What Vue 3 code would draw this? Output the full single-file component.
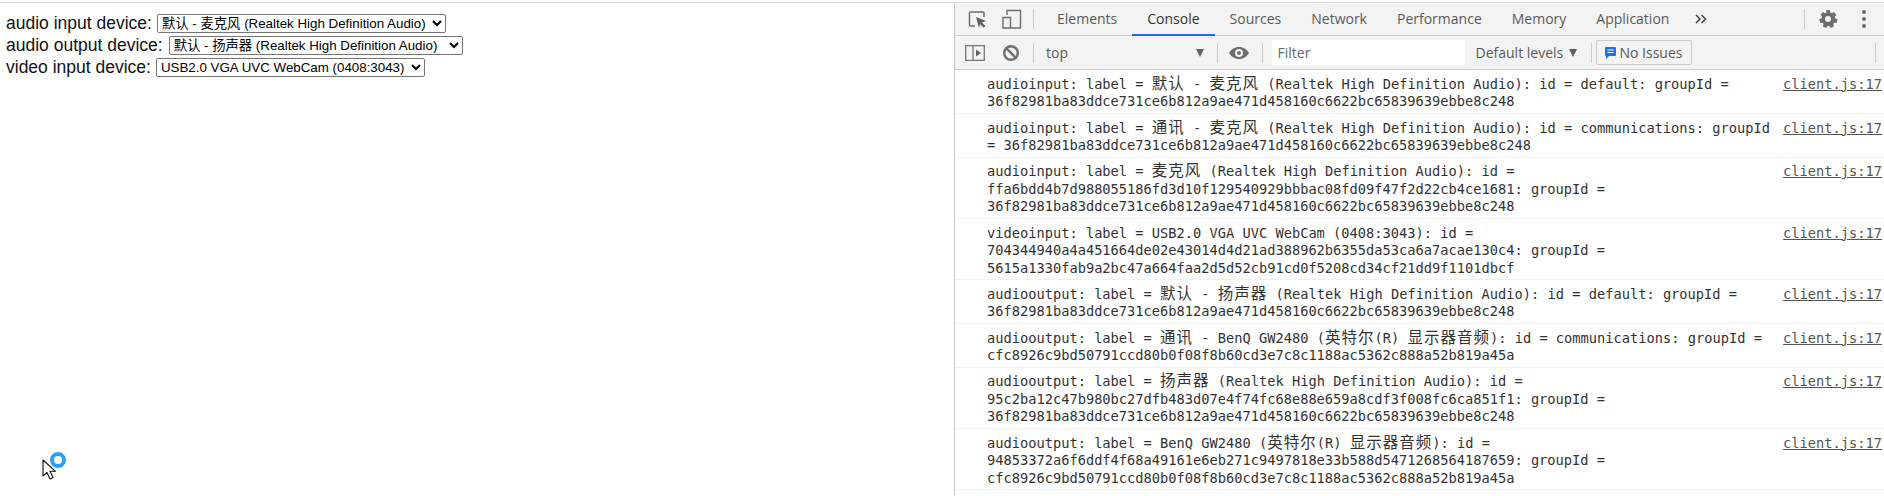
<script setup>
const inputs = ['默认 - 麦克风 (Realtek High Definition Audio)', '通讯 - 麦克风 (Realtek High Definition Audio)', '麦克风 (Realtek High Definition Audio)']
const outputs = ['默认 - 扬声器 (Realtek High Definition Audio)', '通讯 - BenQ GW2480 (英特尔(R) 显示器音频)', '扬声器 (Realtek High Definition Audio)', 'BenQ GW2480 (英特尔(R) 显示器音频)']
const videos = ['USB2.0 VGA UVC WebCam (0408:3043)']
const devices = [
  { label: 'audio input device:', cls: 'sel-a', options: inputs },
  { label: 'audio output device:', cls: 'sel-b', options: outputs },
  { label: 'video input device:', cls: 'sel-c', options: videos },
]
const tabs = ['Elements', 'Console', 'Sources', 'Network', 'Performance', 'Memory', 'Application']
const g1 = '36f82981ba83ddce731ce6b812a9ae471d458160c6622bc65839639ebbe8c248'
const g2 = 'cfc8926c9bd50791ccd80b0f08f8b60cd3e7c8c1188ac5362c888a52b819a45a'
const raw = [
  ['audioinput: label = 默认 - 麦克风 (Realtek High Definition Audio): id = default: groupId =', g1],
  ['audioinput: label = 通讯 - 麦克风 (Realtek High Definition Audio): id = communications: groupId', '= ' + g1],
  ['audioinput: label = 麦克风 (Realtek High Definition Audio): id =', 'ffa6bdd4b7d988055186fd3d10f129540929bbbac08fd09f47f2d22cb4ce1681: groupId =', g1],
  ['videoinput: label = USB2.0 VGA UVC WebCam (0408:3043): id =', '704344940a4a451664de02e43014d4d21ad388962b6355da53ca6a7acae130c4: groupId =', '5615a1330fab9a2bc47a664faa2d5d52cb91cd0f5208cd34cf21dd9f1101dbcf'],
  ['audiooutput: label = 默认 - 扬声器 (Realtek High Definition Audio): id = default: groupId =', g1],
  ['audiooutput: label = 通讯 - BenQ GW2480 (英特尔(R) 显示器音频): id = communications: groupId =', g2],
  ['audiooutput: label = 扬声器 (Realtek High Definition Audio): id =', '95c2ba12c47b980bc27dfb483d07e4f74fc68e88e659a8cdf3f008fc6ca851f1: groupId =', g1],
  ['audiooutput: label = BenQ GW2480 (英特尔(R) 显示器音频): id =', '94853372a6f6ddf4f68a49161e6eb271c9497818e33b588d5471268564187659: groupId =', g2],
]
const split = (s) => s.split(/([\u3000-\u9fff]+)/).filter(Boolean).map((t) => ({ t, cjk: /[\u3000-\u9fff]/.test(t) }))
const rows = raw.map((lines) => lines.map(split))
</script>

<template>
  <div class="page">
    <main class="site">
      <div v-for="d in devices" :key="d.label" class="device">
        <span>{{ d.label }}</span>
        <select :class="['picker', d.cls]">
          <option v-for="o in d.options" :key="o">{{ o }}</option>
        </select>
      </div>
      <div class="pointer">
        <svg width="18" height="22" viewBox="0 0 18 22">
          <path d="M1 1v16l4-3.6 3 6.6 3-1.400-3-6.300h5.500z" fill="#fff" stroke="#111" stroke-width="1.100" stroke-linejoin="round" />
        </svg>
        <span class="busy"></span>
      </div>
    </main>

    <section class="devtools">
      <nav class="bar tabs-bar">
        <svg class="ic inspect" width="22" height="22" viewBox="0 0 22 22">
          <path d="M8 18H3.500a1 1 0 0 1-1-1V5a1 1 0 0 1 1-1H16a1 1 0 0 1 1 1v4" fill="none" stroke="#6e6e6e" stroke-width="1.500" />
          <path d="M9 9l10 4-4 1.500 3.500 3.500-1.800 1.800-3.500-3.500L12 20z" fill="#5f6368" />
        </svg>
        <svg class="ic device-ic" width="22" height="22" viewBox="0 0 22 22">
          <path d="M6 7V2.500h13.500v17.500H6.500M2 9.500h7.500V20H2z" fill="none" stroke="#6e6e6e" stroke-width="1.400" />
        </svg>
        <i class="sep sep-tabs"></i>
        <span v-for="t in tabs" :key="t" :class="['tab', { active: t === 'Console' }]">{{ t }}</span>
        <svg class="ic more" width="12" height="10" viewBox="0 0 12 10">
          <path d="M1 1l4 4-4 4M6.500 1l4 4-4 4" fill="none" stroke="#444" stroke-width="1.500" />
        </svg>
        <i class="sep sep-gear"></i>
        <svg class="ic gear" width="20" height="20" viewBox="0 0 20 20">
          <path fill="#6e6e6e" fill-rule="evenodd" d="M8.200 1h3.600l.5 2.500 1.500.7 2.200-1.300 2.300 2.800-1.500 2 .4 1.600 2.300 1-.8 3.500-2.500-.1-1 1.300.7 2.400-3.200 1.500-1.500-2h-1.600l-1.500 2-3.200-1.500.7-2.400-1-1.300-2.500.1-.8-3.500 2.300-1 .4-1.600-1.500-2 2.300-2.800 2.200 1.300 1.500-.7zM10 7a3 3 0 1 0 0 6 3 3 0 0 0 0-6z" />
        </svg>
        <svg class="ic dots" width="6" height="20" viewBox="0 0 6 20">
          <circle cx="3" cy="3" r="2" fill="#6e6e6e" />
          <circle cx="3" cy="10" r="2" fill="#6e6e6e" />
          <circle cx="3" cy="17" r="2" fill="#6e6e6e" />
        </svg>
      </nav>

      <div class="bar filter-bar">
        <svg class="ic side" width="20" height="16" viewBox="0 0 20 16">
          <path d="M.7.7h18.600v14.600H.7zM8 .7v14.600" fill="none" stroke="#777" stroke-width="1.300" />
          <path d="M11 4.500l5 3.500-5 3.500z" fill="#5f6368" />
        </svg>
        <svg class="ic block" width="18" height="18" viewBox="0 0 18 18">
          <circle cx="9" cy="9" r="6.800" fill="none" stroke="#6e6e6e" stroke-width="2.400" />
          <path d="M4.200 4.200l9.600 9.600" stroke="#6e6e6e" stroke-width="2.400" />
        </svg>
        <i class="sep sep-block"></i>
        <span class="ctx">top</span>
        <i class="tri tri-top"></i>
        <i class="sep sep-ctx"></i>
        <svg class="ic eye" width="20" height="14" viewBox="0 0 20 14">
          <path fill="#6e6e6e" fill-rule="evenodd" d="M10 1c4.500 0 8 2.600 10 6-2 3.400-5.500 6-10 6S2 10.400 0 7c2-3.400 5.500-6 10-6zm0 2a4 4 0 1 0 0 8 4 4 0 0 0 0-8zm0 2a2 2 0 1 1 0 4 2 2 0 0 1 0-4z" />
        </svg>
        <i class="sep sep-eye"></i>
        <div class="filter">Filter</div>
        <span class="levels">Default levels</span>
        <i class="tri tri-levels"></i>
        <i class="sep sep-levels"></i>
        <div class="issues">
          <svg width="11" height="12" viewBox="0 0 11 12">
            <path d="M1 0h9a1 1 0 0 1 1 1v7a1 1 0 0 1-1 1H4l-3 3V9a1 1 0 0 1-1-1V1a1 1 0 0 1 1-1z" fill="#1a73e8" />
            <path d="M2.500 3h6M2.500 5.500h6" stroke="#fff" stroke-width="1.100" />
          </svg>
          <span>No Issues</span>
        </div>
        <i class="sep sep-end"></i>
      </div>

      <div class="log">
        <div v-for="(lines, i) in rows" :key="i" class="row">
          <a class="src">client.js:17</a>
          <div v-for="(line, j) in lines" :key="j" class="line">
            <template v-for="(seg, k) in line" :key="k"><span v-if="seg.cjk" class="cjk">{{ seg.t }}</span><template v-else>{{ seg.t }}</template></template>
          </div>
        </div>
      </div>
    </section>
  </div>
</template>

<style>
html, body { margin: 0; padding: 0; background: #fff; overflow: hidden; }
</style>

<style scoped>
.page {
  display: flex;
  width: 1884px;
  height: 493px;
  margin-top: 3px;
  box-shadow: 0 -1px 0 #dcdcdc;
}
.site {
  position: relative;
  width: 955px;
  height: 493px;
  box-sizing: border-box;
  border-right: 1px solid #ccc;
  padding: 9px 0 0 6px;
  flex: none;
  font: 17.500px/22px "Liberation Sans", Arial, sans-serif;
  color: #111;
}
.device {
  display: flex;
  align-items: center;
  height: 22px;
  gap: 5px;
}
.picker {
  height: 19px;
  box-sizing: border-box;
  padding: 0;
  font: 13.330px "Liberation Sans", "Noto Sans CJK SC", sans-serif;
  color: #000;
  background: #fff;
  border: 1px solid #767676;
  border-radius: 2px;
}
.sel-a { width: 289px; }
.sel-b { margin-left: 1px; width: 294px; }
.sel-c { width: 269px; }
.pointer {
  position: absolute;
  left: 42px;
  top: 456px;
  width: 26px;
  height: 26px;
}
.busy {
  position: absolute;
  left: 8px;
  top: -7px;
  width: 16px;
  height: 16px;
  box-sizing: border-box;
  border: 4.500px solid #2f9ff5;
  border-radius: 50%;
}

.devtools {
  flex: 1;
  min-width: 0;
  display: flex;
  flex-direction: column;
  font-family: "Open Sans", "Noto Sans", sans-serif;
}
.bar {
  display: flex;
  align-items: center;
  background: #f3f3f3;
  border-bottom: 1px solid #ccc;
  box-sizing: border-box;
  color: #5a5a5a;
  flex: none;
}
.tabs-bar { height: 33px; padding-left: 12px; }
.filter-bar { height: 34px; padding-left: 10px; }
.ic { flex: none; display: block; }
.sep { flex: none; display: block; width: 1px; height: 20px; background: #ccc; }
.device-ic { margin-left: 12px; }
.sep-tabs { margin-left: 10px; margin-right: 8px; }
.tab {
  height: 33px;
  line-height: 31px;
  box-sizing: border-box;
  padding: 0 15px;
  font-size: 14px;
  white-space: nowrap;
}
.tab.active {
  color: #333;
  border-bottom: 2.500px solid #1a73e8;
}
.more { margin-left: 11px; }
.sep-gear { margin-left: auto; margin-right: 13px; height: 20px; }
.dots { margin-left: 23px; margin-right: 17px; }

.block { margin-left: 17px; }
.sep-block { margin-left: 13px; }
.ctx { flex: none; margin-left: 12px; width: 150px; font-size: 14px; }
.tri {
  flex: none;
  width: 0;
  height: 0;
  border-left: 4.500px solid transparent;
  border-right: 4.500px solid transparent;
  border-top: 8px solid #5f6368;
}
.sep-ctx { margin-left: 12.500px; }
.eye { margin-left: 11px; }
.sep-eye { margin-left: 13px; }
.filter {
  flex: none;
  margin-left: 9px;
  width: 193px;
  height: 25px;
  line-height: 25px;
  box-sizing: border-box;
  padding-left: 6px;
  background: #fff;
  font-size: 14px;
  color: #666;
}
.levels { flex: none; margin-left: 11px; width: 93.500px; font-size: 14px; white-space: nowrap; }
.sep-levels { margin-left: 13.500px; }
.issues {
  flex: none;
  margin-left: 4px;
  width: 96px;
  height: 25px;
  box-sizing: border-box;
  border: 1px solid #ccc;
  border-radius: 2px;
  display: flex;
  align-items: center;
  gap: 4px;
  padding-left: 8px;
  font-size: 14px;
}
.sep-end { margin-left: auto; margin-right: 8px; }

.log {
  flex: 1;
  font: 13.700px/17.500px "DejaVu Sans Mono", "Liberation Mono", "Noto Sans CJK SC", monospace;
  color: #333;
  overflow: hidden;
}
.row {
  padding: 5.750px 0 2px 32px;
  border-bottom: 1px solid #f0f0f0;
}
.line { height: 17.500px; white-space: pre; }
.cjk {
  font: 15.500px/0 "Noto Sans CJK SC", sans-serif;
  letter-spacing: 1px;
}
.src {
  float: right;
  margin-right: 2px;
  color: #555;
  text-decoration: underline;
}
</style>
